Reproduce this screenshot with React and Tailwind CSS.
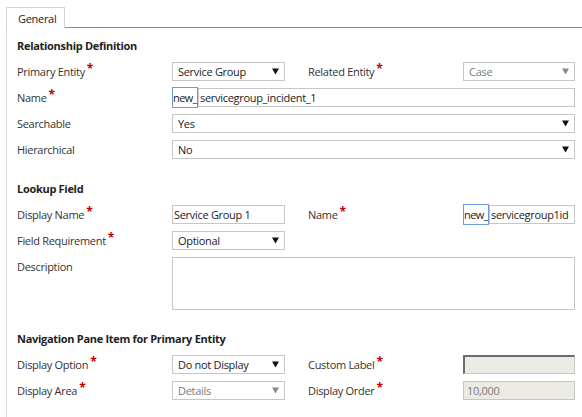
import React from "react";

function Req() {
  return <span className="ml-[2px] text-[#c00000] text-[12px] font-bold leading-none relative top-[-3px]">*</span>;
}

function Label({ children, req, className = "" }) {
  return (
    <div className={"h-[19px] flex items-center text-[#333] whitespace-nowrap " + className}>
      {children}
      {req && <Req />}
    </div>
  );
}

function Arrow({ disabled }) {
  return (
    <svg width="7" height="7" viewBox="0 0 7 7" className="shrink-0">
      <path d="M0 0.5 L7 0.5 L3.5 6.5 Z" fill={disabled ? "#8a8a8a" : "#111"} />
    </svg>
  );
}

function Select({ value, disabled, className = "" }) {
  return (
    <div
      className={
        "h-[19px] border border-[#c6c6c6] bg-white flex items-center justify-between pl-[5px] pr-[5px] " +
        className
      }
    >
      <span className={disabled ? "text-[#7a7a7a]" : "text-[#222]"}>{value}</span>
      <Arrow disabled={disabled} />
    </div>
  );
}

function Input({ value, className = "" }) {
  return (
    <div className={"h-[19px] border border-[#c6c6c6] bg-white flex items-center pl-[1px] text-[#222] " + className}>
      {value}
    </div>
  );
}

function PrefixInput({ rest, className = "" }) {
  return (
    <div className={"h-[19px] flex items-center " + className}>
      <div className="h-[21px] w-[26px] border border-[#6f9bd0] flex items-center text-[#222] shrink-0 whitespace-nowrap tracking-[-0.6px] overflow-hidden">
        new_
      </div>
      <div className="h-[19px] flex-1 border border-[#c6c6c6] flex items-center pl-[1px] text-[#222] min-w-0 whitespace-nowrap">
        {rest}
      </div>
    </div>
  );
}

function Heading({ children, className = "" }) {
  return <div className={"h-[16px] leading-[16px] font-bold text-[#222] " + className}>{children}</div>;
}

const grid = "grid grid-cols-[155px_113px_23px_155px_112px] items-start";

export default function App() {
  return (
    <div className="w-[582px] h-[417px] bg-white overflow-hidden font-['Open_Sans',sans-serif] text-[11px] tracking-[-0.3px] leading-none">
      {/* tab strip */}
      <div className="flex items-end pt-[7px] pl-[6px]">
        <div className="h-[21px] w-[59px] border border-b-0 border-[#d4d4d4] flex items-center pl-[11px] text-[#222] bg-white">
          General
        </div>
        <div className="flex-1 border-b border-[#8a8a8a]" />
      </div>
      {/* content */}
      <div className="ml-[6px] border-l border-[#dcdcdc] h-[390px] pl-[10px] pt-[10px]">
        <Heading>Relationship Definition</Heading>
        <div className="flex flex-col gap-[7px] mt-[8px]">
          <div className={grid}>
            <Label req>Primary Entity</Label>
            <Select value="Service Group" />
            <div />
            <Label req>Related Entity</Label>
            <Select value="Case" disabled />
          </div>
          <div className={grid}>
            <Label req>Name</Label>
            <PrefixInput rest="servicegroup_incident_1" className="col-span-4" />
          </div>
          <div className={grid}>
            <Label>Searchable</Label>
            <Select value="Yes" className="col-span-4" />
          </div>
          <div className={grid}>
            <Label>Hierarchical</Label>
            <Select value="No" className="col-span-4" />
          </div>
        </div>

        <Heading className="mt-[22px]">Lookup Field</Heading>
        <div className="flex flex-col gap-[7px] mt-[8px]">
          <div className={grid}>
            <Label req>Display Name</Label>
            <Input value="Service Group 1" />
            <div />
            <Label req>Name</Label>
            <PrefixInput rest="servicegroup1id" />
          </div>
          <div className={grid}>
            <Label req>Field Requirement</Label>
            <Select value="Optional" />
          </div>
          <div className={grid}>
            <Label>Description</Label>
            <div className="col-span-4 h-[53px] border border-[#c6c6c6] bg-white" />
          </div>
        </div>

        <Heading className="mt-[21px]">Navigation Pane Item for Primary Entity</Heading>
        <div className="flex flex-col gap-[7px] mt-[8px]">
          <div className={grid}>
            <Label req>Display Option</Label>
            <Select value="Do not Display" />
            <div />
            <Label req>Custom Label</Label>
            <div className="h-[19px] bg-[#ebebe4] border border-[#c6c6c6] border-t-2 border-l-2 border-t-[#6b6b6b] border-l-[#6b6b6b]" />
          </div>
          <div className={grid}>
            <Label req>Display Area</Label>
            <Select value="Details" disabled />
            <div />
            <Label req>Display Order</Label>
            <div className="h-[19px] bg-[#ebebe4] border border-[#c6c6c6] flex items-center pl-[3px] text-[#7a7a7a]">
              10,000
            </div>
          </div>
        </div>
      </div>
    </div>
  );
}
